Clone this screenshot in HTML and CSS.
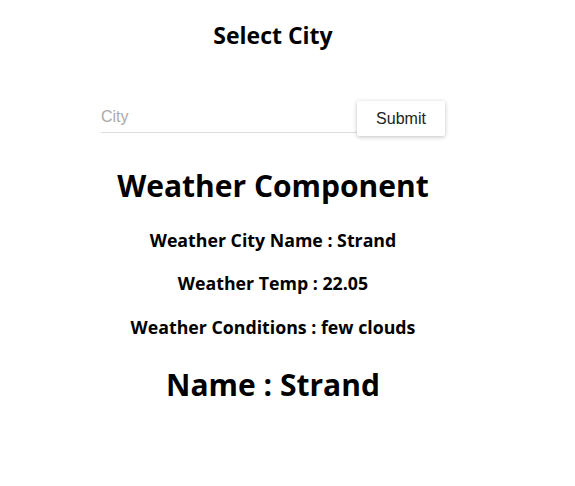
FILE: index.html
```html
<!DOCTYPE html>
<html>
<head>
<meta charset="utf-8">
<link rel="stylesheet" href="styles.css">
</head>
<body>
<div class="app">
  <h2 class="title">Select City</h2>
  <form class="form">
    <input class="city" type="text" placeholder="City">
    <button class="submit" type="button">Submit</button>
  </form>
  <h1 class="heading">Weather Component</h1>
  <h3 class="line">Weather City Name : Strand</h3>
  <h3 class="line">Weather Temp : 22.05</h3>
  <h3 class="line">Weather Conditions : few clouds</h3>
  <h1 class="name">Name : Strand</h1>
</div>
</body>
</html>
```
FILE: styles.css
```css
html, body { margin: 0; padding: 0; background: #fff; }
body { font-family: "Open Sans", "Noto Sans", sans-serif; color: #000; }
.app { width: 546px; display: flex; flex-direction: column; align-items: center; }
.title { font-size: 23px; font-weight: 700; margin: 20px 0 0; line-height: 30px; }
.form { display: flex; align-items: flex-start; margin-top: 51px; }
.city { box-sizing: border-box; width: 256px; height: 32px; border: none; border-bottom: 1px solid #ddd; font-family: "Liberation Sans", Arial, sans-serif; font-size: 16px; padding: 0; outline: none; }
.city::placeholder { color: #aaa; }
.submit { width: 88px; height: 35px; background: #fff; border: none; border-radius: 2px; box-shadow: 0 1px 4px rgba(0,0,0,0.25); font-family: "Liberation Sans", Arial, sans-serif; font-size: 16px; color: #222; }
.heading { font-size: 30px; font-weight: 700; margin: 28px 0 0; line-height: 44px; }
.line { font-size: 17.75px; font-weight: 700; margin: 0; line-height: 24px; }
.heading + .line { margin-top: 20px; }
.line + .line { margin-top: 19px; }
.line + .line + .line { margin-top: 20px; }
.name { font-size: 30px; font-weight: 700; margin: 24px 0 0; line-height: 44px; }
```
